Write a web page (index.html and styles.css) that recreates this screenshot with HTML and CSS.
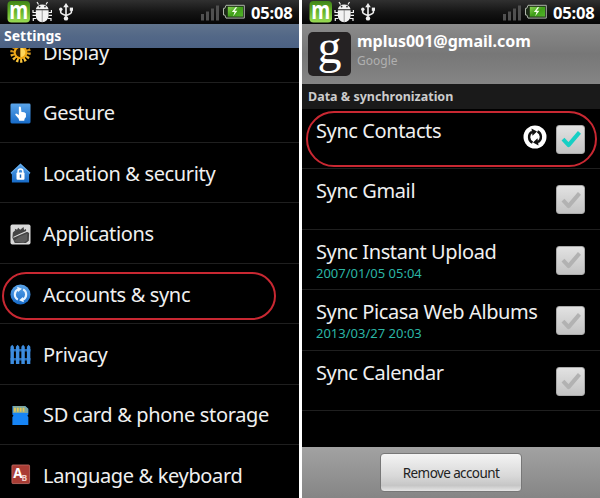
FILE: index.html
```html
<!DOCTYPE html>
<html lang="en">
<head>
	<meta charset="utf-8">
	<meta name="viewport" content="width=device-width, initial-scale=1">
	<title>Accounts &amp; sync</title>
	<link rel="stylesheet" href="styles.css">
</head>
<body>

	<!-- shared icons -->
	<svg class="defs" width="0" height="0">
		<defs>
			<linearGradient id="green" x1="0" y1="0" x2="0" y2="1">
				<stop offset="0" stop-color="#3f8418"/>
				<stop offset=".5" stop-color="#68b52b"/>
				<stop offset="1" stop-color="#9bdc55"/>
			</linearGradient>
			<linearGradient id="cell" x1="0" y1="0" x2="1" y2="1">
				<stop offset="0" stop-color="#8bd653"/>
				<stop offset=".5" stop-color="#3f9f18"/>
				<stop offset="1" stop-color="#52b52a"/>
			</linearGradient>
			<linearGradient id="blue" x1="0" y1="0" x2="0" y2="1">
				<stop offset="0" stop-color="#5ba5ea"/>
				<stop offset="1" stop-color="#176bc8"/>
			</linearGradient>
			<linearGradient id="gold" x1="0" y1="0" x2="0" y2="1">
				<stop offset="0" stop-color="#b06a00"/>
				<stop offset="1" stop-color="#ffc93c"/>
			</linearGradient>
		</defs>
		<symbol id="status" viewBox="0 0 298 24">
			<rect x="7.5" y="1" width="22.5" height="21.5" rx="4" fill="url(#green)"/>
			<text x="0" y="0" transform="translate(18.8 19) scale(.88 1.15)" class="m-logo">m</text>
			<g fill="#f2f2f2" stroke="#f2f2f2">
				<path d="M35.8 9.2a6.6 6.3 0 0 1 12.8 0z" stroke="none"/>
				<path d="M38.5 4.5L37 2M46 4.5L47.5 2" stroke-width="1.2"/>
				<path d="M35.8 10.2h12.8v5.6a6.4 6.4 0 0 1-12.8 0z" stroke="none"/>
				<path d="M33 10v2.5h3M51.4 10v2.5h-3M32.5 15.3h3.5M52 15.3h-3.5M33.3 21v-2.5h3M51 21v-2.5h-3" fill="none" stroke-width="1.2"/>
			</g>
			<path d="M42.2 10v12" stroke="#777" stroke-width=".7"/>
			<circle cx="39.6" cy="6.6" r=".9" fill="#333"/><circle cx="45" cy="6.6" r=".9" fill="#333"/>
			<g fill="none" stroke="#eee" stroke-width="1.6">
				<path d="M66 6v12M60.7 10v2.2q0 1.5 5.3 3.3M71.4 9.8v2.4q0 1.5-5.4 3.3"/>
			</g>
			<path d="M66 3l2.8 4.2h-5.6z" fill="#eee"/>
			<circle cx="66" cy="18.4" r="2.2" fill="#eee"/>
			<circle cx="60.8" cy="9.2" r="1.7" fill="#eee"/>
			<rect x="69.8" y="7.6" width="3.2" height="3.2" fill="#eee"/>
			<g fill="#505050">
				<rect x="201" y="14" width="3" height="6.5"/><rect x="206" y="11.5" width="3" height="9"/>
				<rect x="211" y="8.5" width="3" height="12"/><rect x="216" y="5.5" width="3" height="15"/>
			</g>
			<path d="M226 5.3h18.3v12.8H226l-1.2-3.1h-1.3V8.3h1.3z" fill="#1d2b18" stroke="#aeb5aa"/>
			<rect x="227.8" y="6.8" width="15.2" height="9.8" fill="url(#cell)"/>
			<path d="M235.5 7.3l-3.6 4.8h2.6l-1.3 4.2 4.2-5.5h-2.8l2.6-3.5z" fill="#f4ffe9"/>
		</symbol>
		<symbol id="check" viewBox="0 0 18 16">
			<path d="M1.8 8.2L6.8 13.5L16.6 2" fill="none" stroke="currentColor" stroke-width="3.6" stroke-linejoin="round"/>
		</symbol>
	</svg>

	<main>
		<section class="phone settings">
			<header class="status">
				<svg class="status-icons"><use href="#status"/></svg>
				<span class="clock">05:08</span>
			</header>
			<h1 class="title">Settings</h1>
			<ul class="menu">
				<li>
					<svg class="icon" viewBox="0 0 22 22">
						<circle cx="11" cy="11" r="8.5" fill="none" stroke="url(#gold)" stroke-width="4.5" stroke-dasharray="2.2 1.61"/>
						<circle cx="11" cy="11" r="7.2" fill="#f2a915"/>
						<path d="M11 6a5 5 0 0 0 0 10z" fill="#2b1900"/>
						<path d="M11 6a5 5 0 0 1 0 10z" fill="#ffd65b"/>
					</svg>
					<span class="label">Display</span>
				</li>
				<li>
					<svg class="icon" viewBox="0 0 22 22">
						<rect x=".5" y=".5" width="21" height="21" rx="1.5" fill="url(#blue)"/>
						<path d="M9.3 4.2q1.2-1.2 2 0l.7 5.2q3.3-.2 4.7 1.5.7 3.5-1.4 5.7l-.4 2H9.6l-.5-2-3.6-4.3q.3-1.8 2-.9l1.8 1.3z" fill="#fff"/>
					</svg>
					<span class="label">Gesture</span>
				</li>
				<li>
					<svg class="icon" viewBox="0 0 22 22">
						<path d="M11 .5L21.5 10.3 20 12v8.5H2V12L.5 10.3z" fill="url(#blue)"/>
						<path d="M1.2 10.6L11 1.5l9.8 9.1" fill="none" stroke="#6eb4f0"/>
						<path d="M8.5 10.5V8.8a2.5 2.5 0 0 1 5 0v1.7" fill="none" stroke="#fff" stroke-width="1.6"/>
						<rect x="6.8" y="10" width="8.4" height="7.5" rx="1" fill="#fff"/>
						<path d="M11 12v3.5" stroke="#1d66b8" stroke-width="1.5"/>
					</svg>
					<span class="label">Location &amp; security</span>
				</li>
				<li>
					<svg class="icon" viewBox="0 0 22 22">
						<rect x=".5" y=".5" width="21" height="21" rx="2" fill="#d9d9d9"/>
						<path d="M2.5 14.5L3 9l2.5-2.5L5 5l2.5 1 1-2 2.2 2 3.5-2.8.5 3 2-1 .3 2.3 3 2-.3 8-3 2.5H5z" fill="#444"/>
						<path d="M4 18l6-5 8-3v7l-4 3z" fill="#5c5c5c"/>
						<path d="M3.5 14l6.5-3 9-4" stroke="#ddd" stroke-width="1.1" fill="none"/>
					</svg>
					<span class="label">Applications</span>
				</li>
				<li class="active">
					<svg class="icon" viewBox="0 0 22 22">
						<circle cx="11" cy="11" r="10.5" fill="url(#blue)"/>
						<path d="M8.2 16.3A6 6 0 0 1 8.5 5.6M13.8 5.7a6 6 0 0 1-.3 10.7" fill="none" stroke="#e9f5ff" stroke-width="2.2"/>
						<path d="M7.5 3l5 2-4 3.5zM14.5 19l-5-2 4-3.5z" fill="#e9f5ff"/>
					</svg>
					<span class="label">Accounts &amp; sync</span>
				</li>
				<li>
					<svg class="icon" viewBox="0 0 22 22">
						<path d="M.5 6.5h21M.5 16h21" stroke="#2568b0" stroke-width="2.5"/>
						<path d="M.5 21V3L2.3.8 4.1 3v18zM6.2 21V3L8 .8 9.8 3v18zM11.9 21V3l1.8-2.2L15.5 3v18zM17.7 21V3l1.8-2.2L21.3 3v18z" fill="#3d8de0"/>
					</svg>
					<span class="label">Privacy</span>
				</li>
				<li>
					<svg class="icon" viewBox="0 0 22 22">
						<path d="M3 1h13l3.2 3v6l-1 1.2 1 1.3V21H2.5v-8.5l1.2-1.3L2.5 10V1z" fill="#1684f5"/>
						<path d="M3 1h12.7L19 4v4.5H3z" fill="#7da7a0"/>
						<path d="M5.2 3v4M8.2 3v4M11.2 3v4M14.2 3v4" stroke="#e8c64e" stroke-width="1.8"/>
					</svg>
					<span class="label">SD card &amp; phone storage</span>
				</li>
				<li>
					<svg class="icon" viewBox="0 0 22 22">
						<rect x="2" y="1" width="18.5" height="19.5" rx="1" fill="#a93c34" stroke="#c9736b" stroke-width=".8"/>
						<text x="3.3" y="14.5" class="glyph-a">A</text>
						<text x="12" y="18" class="glyph-b">B</text>
					</svg>
					<span class="label">Language &amp; keyboard</span>
				</li>
			</ul>
		</section>

		<section class="phone account">
			<header class="status">
				<svg class="status-icons"><use href="#status"/></svg>
				<span class="clock">05:08</span>
			</header>
			<div class="profile">
				<div class="logo">g</div>
				<div class="who">
					<h2>mplus001@gmail.com</h2>
					<p>Google</p>
				</div>
			</div>
			<h3 class="section-title">Data &amp; synchronization</h3>
			<ul class="sync">
				<li class="active">
					<div class="text"><span class="name">Sync Contacts</span></div>
					<svg class="syncing" viewBox="0 0 24 24">
						<circle cx="12" cy="12" r="11.5" fill="#fff"/>
						<path d="M9.5 17.6A6.2 6.2 0 0 1 9 6.8M14.5 6.4A6.2 6.2 0 0 1 15 17.2" fill="none" stroke="#111" stroke-width="2.4"/>
						<path d="M8.5 3.5l5.5 3-4.5 4.2zM15.5 20.5l-5.5-3 4.5-4.2z" fill="#111"/>
					</svg>
					<span class="box on"><svg><use href="#check"/></svg></span>
				</li>
				<li>
					<div class="text"><span class="name">Sync Gmail</span></div>
					<span class="box"><svg><use href="#check"/></svg></span>
				</li>
				<li>
					<div class="text"><span class="name">Sync Instant Upload</span><span class="date">2007/01/05 05:04</span></div>
					<span class="box"><svg><use href="#check"/></svg></span>
				</li>
				<li>
					<div class="text"><span class="name">Sync Picasa Web Albums</span><span class="date">2013/03/27 20:03</span></div>
					<span class="box"><svg><use href="#check"/></svg></span>
				</li>
				<li>
					<div class="text"><span class="name">Sync Calendar</span></div>
					<span class="box"><svg><use href="#check"/></svg></span>
				</li>
			</ul>
			<footer class="actions">
				<button type="button">Remove account</button>
			</footer>
		</section>
	</main>

</body>
</html>
```
FILE: styles.css
```css
*, *::after {
	box-sizing: border-box;
}

body {
	margin: 0;
	overflow: hidden;
	background: #fff;
	font-family: "Noto Sans", "Open Sans", sans-serif;
	color: #f0f0f0;
}

h1, h2, h3, p, ul {
	margin: 0;
	padding: 0;
}

li {
	list-style: none;
}

.defs {
	display: block;
}

main {
	display: flex;
	gap: 3px;
	width: 600px;
	height: 498px;
}

.phone {
	display: flex;
	flex-direction: column;
	height: 498px;
	overflow: hidden;
	background: #000;
}

.settings {
	width: 299px;
}

.account {
	width: 298px;
}

/* status bar */
.status {
	display: flex;
	flex: none;
	height: 24px;
	background: linear-gradient(#303030, #151515 50%, #050505);
}

.status-icons {
	flex: none;
	width: 298px;
	height: 24px;
}

.clock {
	width: 48px;
	margin-left: -47px;
	font-size: 16.5px;
	font-weight: bold;
	line-height: 25px;
	letter-spacing: -0.2px;
	color: #fff;
}

.m-logo {
	font: bold 22px "Open Sans", sans-serif;
	text-anchor: middle;
	fill: #fff;
}

/* settings list */
.title {
	flex: none;
	height: 24px;
	padding-left: 4px;
	background: linear-gradient(#60738c, #536887 50%, #4c6284);
	font-size: 14px;
	line-height: 23px;
	color: #fff;
}

.menu {
	overflow: hidden;
	height: 450px;
	display: flex;
	flex-direction: column;
	justify-content: flex-end;
}

.menu li {
	display: flex;
	flex: none;
	align-items: center;
	gap: 12px;
	height: 60.4px;
	padding: 2px 0 0 10px;
	border-bottom: 1px solid #1f1f1f;
}

.menu li:last-child {
	height: 53px;
	align-items: flex-start;
	padding-top: 19px;
	border: 0;
}

.menu li:last-child .label {
	margin-top: -1px;
}

.icon {
	width: 21px;
	height: 21px;
}

.label {
	font-size: 20px;
	line-height: 26px;
	letter-spacing: -0.35px;
	white-space: nowrap;
}

.glyph-a {
	font: bold 14px "Noto Sans", sans-serif;
	fill: #fff;
}

.glyph-b {
	font: bold 9px "Noto Sans", sans-serif;
	fill: #f0cfcb;
}

.active {
	position: relative;
}

/* red marker round the highlighted row */
.active::after {
	content: "";
	position: absolute;
	border: 2px solid #c92832;
	border-radius: 28px;
}

.menu .active::after {
	left: 2px;
	top: 8px;
	width: 274px;
	height: 48px;
}

.sync .active::after {
	left: 4px;
	top: 2px;
	width: 291px;
	height: 56px;
}

/* account page */
.profile {
	display: flex;
	flex: none;
	gap: 6px;
	height: 60px;
	padding: 8px 0 0 6px;
	background: linear-gradient(#8b8b8b, #777 50%, #858585);
}

.logo {
	width: 43px;
	height: 44px;
	border-radius: 5px;
	background: #252223;
	font-family: "Liberation Serif", serif;
	font-size: 48px;
	line-height: 30px;
	text-align: center;
	color: #fff;
}

.who h2 {
	font-size: 16px;
	line-height: 18px;
	color: #fff;
}

.who p {
	font-size: 12px;
	line-height: 22px;
	color: #b0b0b0;
}

.section-title {
	flex: none;
	height: 24.5px;
	padding-left: 6px;
	background: #1a1a1a;
	font-size: 12.5px;
	line-height: 25px;
	color: #ccc;
}

.sync {
	flex: 1;
}

.sync li {
	display: flex;
	height: 60.5px;
	padding: 10px 15px 0 14px;
	border-bottom: 1px solid #1f1f1f;
}

.text {
	display: flex;
	flex: 1;
	flex-direction: column;
}

.name {
	font-size: 20px;
	line-height: 24px;
	letter-spacing: -0.4px;
	white-space: nowrap;
}

.date {
	font-size: 13px;
	line-height: 19px;
	color: #2bb5a5;
}

.syncing {
	width: 24px;
	height: 24px;
	margin: 6px 9px 0 0;
}

.box {
	display: flex;
	align-items: center;
	justify-content: center;
	width: 29px;
	height: 29px;
	margin-top: 6px;
	border: 1px solid #aaa;
	border-radius: 3px;
	background: linear-gradient(#e2e2e2, #c3c3c3);
	color: #b2b2b2;
}

.box svg {
	width: 20px;
	height: 18px;
}

.box.on {
	color: #16cfc4;
}

.actions {
	display: flex;
	flex: none;
	height: 51px;
	padding: 6px 0 0 78px;
	background: linear-gradient(#a2a2a2, #858585);
}

.actions button {
	width: 142px;
	height: 39px;
	padding: 0;
	border: 1px solid #777;
	border-radius: 4px;
	background: linear-gradient(#f4f4f4, #d8d8d8 60%, #c6c6c6 85%, #e5e5e5);
	font: 13.5px "Noto Sans", sans-serif;
	letter-spacing: -0.6px;
	color: #222;
}
```
